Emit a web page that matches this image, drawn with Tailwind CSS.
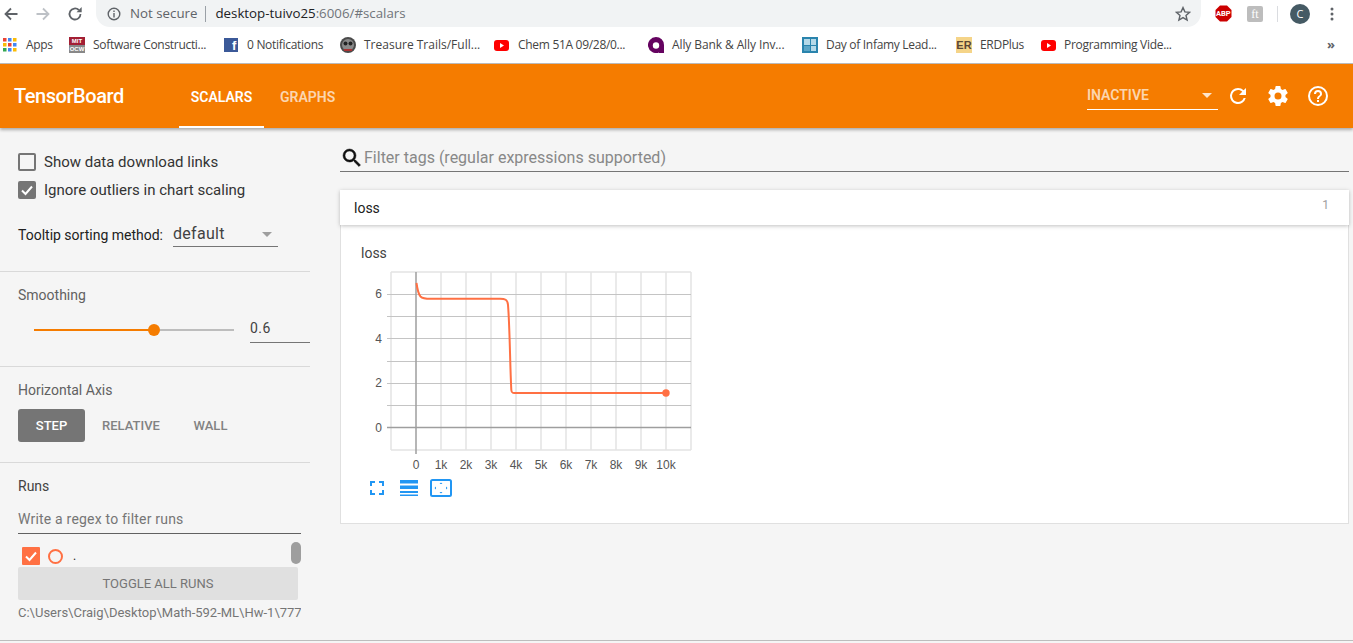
<!DOCTYPE html>
<html>
<head>
  <title>TensorBoard</title>
  <script src="https://cdn.jsdelivr.net/npm/@tailwindcss/browser@4"></script>
  <meta name="viewport" content="width=device-width, initial-scale=1.0"/>
</head>
<body class="h-[643px] w-[1353px] overflow-hidden bg-[#f5f5f5] font-['Roboto',sans-serif]">
  <!-- browser toolbar -->
  <div class="h-[27px] bg-white flex items-center relative">
    <div class="w-[96px] flex items-center pl-[3px] gap-[16px] shrink-0">
      <svg class="w-[16px] h-[16px]" viewBox="0 0 16 16"><path d="M14.5 8H3M8 2.5 2.5 8 8 13.5" fill="none" stroke="#5f6368" stroke-width="1.8"/></svg>
      <svg class="w-[16px] h-[16px]" viewBox="0 0 16 16"><path d="M1.5 8H13M8 2.5 13.5 8 8 13.5" fill="none" stroke="#bdc1c6" stroke-width="1.8"/></svg>
      <svg class="w-[16px] h-[16px]" viewBox="0 0 16 16"><path d="M13.5 8A5.5 5.5 0 1 1 11.8 4" fill="none" stroke="#5f6368" stroke-width="1.8"/><path d="M9.5 6.2h5.2V1z" fill="#5f6368"/></svg>
    </div>
    <div class="w-[1105px] h-[27px] bg-[#f1f3f4] rounded-b-[14px] flex items-center pl-[11px] font-['Open_Sans',sans-serif] text-[13.3px] shrink-0">
      <svg class="w-[14px] h-[14px] mr-[9px]" viewBox="0 0 14 14"><circle cx="7" cy="7" r="5.8" fill="none" stroke="#5f6368" stroke-width="1.4"/><path d="M6.3 3.5h1.4v1.4H6.3zM6.3 6h1.4v4.5H6.3z" fill="#5f6368"/></svg>
      <span class="text-[#5f6368]">Not secure</span>
      <span class="w-px h-[16px] bg-[#9aa0a6] ml-[8px] mr-[9px]"></span>
      <span class="text-[#202124]">desktop-tuivo25</span><span class="text-[#70757a]">:6006/#scalars</span>
      <svg class="w-[16px] h-[16px] ml-auto mr-[10px]" viewBox="0 0 16 16"><path d="m8 1.6 1.9 4.3 4.7.4-3.6 3.1 1.1 4.6L8 11.6l-4.1 2.4L5 9.4 1.4 6.3l4.7-.4z" fill="none" stroke="#5f6368" stroke-width="1.4"/></svg>
    </div>
    <div class="flex items-center flex-1">
      <svg class="w-[17px] h-[17px] ml-[14px]" viewBox="0 0 17 17"><path d="M5 .5h7L16.500 5v7L12 16.500H5L.5 12V5z" fill="#c00"/></svg>
      <span class="absolute left-[1216px] top-[9px] text-[7.500px] font-bold text-white leading-[10px]">ABP</span>
      <span class="w-[16px] h-[16px] ml-[15px] bg-[#bdbdbd] rounded-[2px] text-white text-[12px] leading-[16px] text-center font-['Liberation_Serif',serif]">ft</span>
      <span class="w-px h-[16px] bg-[#dadce0] ml-[14px]"></span>
      <span class="w-[20px] h-[20px] ml-[12px] rounded-full bg-[#455a64] text-white text-[11px] leading-[20px] text-center font-['Open_Sans',sans-serif]">C</span>
      <svg class="w-[4px] h-[14px] ml-[20px]" viewBox="0 0 4 14"><circle cx="2" cy="2" r="1.500" fill="#5f6368"/><circle cx="2" cy="7" r="1.500" fill="#5f6368"/><circle cx="2" cy="12" r="1.500" fill="#5f6368"/></svg>
    </div>
  </div>

  <!-- bookmarks bar -->
  <div class="h-[36px] bg-white border-b border-[#bdbdbd] box-content flex items-center text-[12px] tracking-[-0.3px] text-[#444] font-['Open_Sans',sans-serif] relative">
    <div class="flex items-center w-[69px] pl-[3px] gap-[9px]">
      <svg class="w-[14px] h-[14px]" viewBox="0 0 14 14">
        <rect width="3.500" height="3.500" fill="#ea4335"/><rect x="5" width="3.500" height="3.500" fill="#4285f4"/><rect x="10" width="3.500" height="3.500" fill="#fbbc05"/>
        <rect y="5" width="3.500" height="3.500" fill="#fbbc05"/><rect x="5" y="5" width="3.500" height="3.500" fill="#ea4335"/><rect x="10" y="5" width="3.500" height="3.500" fill="#4285f4"/>
        <rect y="10" width="3.500" height="3.500" fill="#34a853"/><rect x="5" y="10" width="3.500" height="3.500" fill="#4285f4"/><rect x="10" y="10" width="3.500" height="3.500" fill="#fbbc05"/>
      </svg>
      <span>Apps</span>
    </div>
    <div class="flex items-center w-[155px] gap-[8px]">
      <span class="w-[16px] h-[16px] bg-[#888] flex flex-col text-white text-[6px] leading-[8px] font-bold text-center font-['Liberation_Sans',sans-serif] tracking-normal"><span class="bg-[#a31f34]">MIT</span><span>OCW</span></span>
      <span>Software Constructi...</span>
    </div>
    <div class="flex items-center w-[116px] gap-[9px]">
      <span class="w-[14px] h-[14px] bg-[#3b5998] text-white text-[13px] leading-[15px] text-right pr-[2px] font-bold font-['Liberation_Sans',sans-serif]">f</span>
      <span>0 Notifications</span>
    </div>
    <div class="flex items-center w-[154px] gap-[8px]">
      <svg class="w-[16px] h-[16px]" viewBox="0 0 16 16"><circle cx="8" cy="8" r="8" fill="#4a4a4a"/><circle cx="8" cy="8" r="6" fill="#8a8a8a"/><circle cx="5.500" cy="6.500" r="2" fill="#222"/><circle cx="10.500" cy="6.500" r="2" fill="#222"/><path d="M4 12h8v2H4z" fill="#a33"/></svg>
      <span class="tracking-normal">Treasure Trails/Full...</span>
    </div>
    <div class="flex items-center w-[154px] gap-[9px]">
      <svg class="w-[15px] h-[11px]" viewBox="0 0 15 11"><rect width="15" height="11" rx="3" fill="#f00"/><path d="m6 3 4 2.500L6 8z" fill="#fff"/></svg>
      <span>Chem 51A 09/28/0...</span>
    </div>
    <div class="flex items-center w-[154px] gap-[8px]">
      <svg class="w-[16px] h-[16px]" viewBox="0 0 16 16"><path d="M8 0a8 8 0 1 0 3 15.400V16h5V8a8 8 0 0 0-8-8z" fill="#650360"/><circle cx="8" cy="8.500" r="3.200" fill="#fff"/></svg>
      <span class="tracking-[-0.1px]">Ally Bank &amp; Ally Inv...</span>
    </div>
    <div class="flex items-center w-[154px] gap-[8px]">
      <span class="w-[16px] h-[16px] bg-[#2a84ad] grid grid-cols-2 gap-[1px] p-[2px]"><i class="bg-[#b5d9e8]"></i><i class="bg-[#b5d9e8]"></i><i class="bg-[#5ba5c6]"></i><i class="bg-[#b5d9e8]"></i></span>
      <span>Day of Infamy Lead...</span>
    </div>
    <div class="flex items-center w-[85px] gap-[8px]">
      <span class="w-[16px] h-[16px] bg-[#f5d488] text-[#5b4636] text-[11px] leading-[16px] font-bold text-center tracking-normal font-['Liberation_Sans',sans-serif]">ER</span>
      <span>ERDPlus</span>
    </div>
    <div class="flex items-center gap-[8px]">
      <svg class="w-[15px] h-[11px]" viewBox="0 0 15 11"><rect width="15" height="11" rx="3" fill="#f00"/><path d="m6 3 4 2.500L6 8z" fill="#fff"/></svg>
      <span>Programming Vide...</span>
    </div>
    <span class="absolute left-[1327px] top-[9px] text-[13px] leading-[16px] text-[#5f6368] font-bold">»</span>
  </div>

  <!-- app header -->
  <header class="h-[64px] bg-[#f57c00] flex items-stretch text-white shadow-[0_2px_3px_rgba(0,0,0,0.3)] relative">
    <div class="w-[179px] pl-[14px] flex items-center text-[20px] font-medium tracking-[-0.45px]">TensorBoard</div>
    <div class="w-[85px] flex items-center justify-center text-[14px] font-semibold border-b-2 border-white pt-[4px]">SCALARS</div>
    <div class="ml-[16px] flex items-center text-[14px] font-semibold text-white/70 pt-[2px]">GRAPHS</div>
    <div class="ml-auto flex items-center">
      <div class="w-[131px] h-[30px] border-b border-white flex items-center justify-between text-[14px] font-semibold text-white/70 mt-[-3px] pt-[2px]">
        <span>INACTIVE</span>
        <span class="w-0 h-0 mr-[6px] border-x-[5px] border-x-transparent border-t-[5px] border-t-white/80"></span>
      </div>
      <svg class="w-[24px] h-[24px] ml-[8px]" viewBox="0 0 24 24"><path d="M17.650 6.350A7.960 7.960 0 0 0 12 4a8 8 0 1 0 7.730 10h-2.080A6 6 0 1 1 12 6c1.660 0 3.140.690 4.220 1.780L13 11h7V4z" fill="#fff"/></svg>
      <svg class="w-[24px] h-[24px] ml-[16px]" viewBox="0 0 24 24"><path d="M19.430 12.980c.04-.32.070-.640.070-.980s-.03-.660-.07-.980l2.110-1.650a.5.500 0 0 0 .120-.640l-2-3.460a.5.500 0 0 0-.610-.220l-2.490 1a7.300 7.300 0 0 0-1.690-.980l-.380-2.650A.49.490 0 0 0 14 2h-4a.49.490 0 0 0-.490.420l-.380 2.650a7.700 7.700 0 0 0-1.690.980l-2.490-1a.5.500 0 0 0-.610.220l-2 3.460a.490.490 0 0 0 .120.640l2.110 1.650c-.04.320-.070.650-.070.980s.03.660.07.980l-2.110 1.650a.5.500 0 0 0-.120.640l2 3.460c.120.220.390.300.610.220l2.490-1c.520.400 1.080.730 1.690.980l.380 2.650c.030.240.240.420.490.420h4c.250 0 .460-.180.490-.420l.380-2.650a7.700 7.700 0 0 0 1.690-.980l2.490 1c.230.090.490 0 .610-.220l2-3.460a.5.500 0 0 0-.120-.640zM12 15.500a3.500 3.500 0 1 1 0-7 3.500 3.500 0 0 1 0 7z" fill="#fff"/></svg>
      <svg class="w-[24px] h-[24px] ml-[16px] mr-[23px]" viewBox="0 0 24 24"><path d="M11 18h2v-2h-2zm1-16a10 10 0 1 0 0 20 10 10 0 0 0 0-20zm0 18a8 8 0 1 1 0-16 8 8 0 0 1 0 16zm0-14a4 4 0 0 0-4 4h2a2 2 0 1 1 4 0c0 2-3 1.750-3 5h2c0-2.250 3-2.500 3-5a4 4 0 0 0-4-4z" fill="#fff"/></svg>
    </div>
  </header>

  <div class="h-[512px] flex border-b border-[#bdbdbd] box-content">
    <!-- sidebar -->
    <aside class="w-[310px] shrink-0 text-[14px] text-[#424242]">
      <section class="h-[144px] border-b border-[#d9d9d9] pl-[18px] pt-[25px]">
        <label class="flex items-center h-[18px] gap-[8px] text-[15px] text-[#333]">
          <span class="w-[18px] h-[18px] rounded-[2px] border-2 border-[#757575]"></span>Show data download links
        </label>
        <label class="flex items-center h-[18px] gap-[8px] mt-[10px] text-[15px] text-[#333]">
          <span class="w-[18px] h-[18px] rounded-[2px] bg-[#757575] flex items-center justify-center">
            <svg class="w-[14px] h-[14px]" viewBox="0 0 14 14"><path d="m2 7.500 3.500 3.500L12 3.500" fill="none" stroke="#fff" stroke-width="2"/></svg>
          </span>Ignore outliers in chart scaling
        </label>
        <div class="flex items-start mt-[21px]">
          <span class="text-[#212121] pt-[5px] w-[155px]">Tooltip sorting method:</span>
          <div class="w-[105px] h-[27px] border-b border-[#757575] flex items-start justify-between text-[16px] text-[#424242] tracking-[0.3px]">
            <span class="leading-[20px] pt-[4px] box-content">default</span>
            <span class="w-0 h-0 mt-[12px] mr-[6px] border-x-[5px] border-x-transparent border-t-[5px] border-t-[#9e9e9e]"></span>
          </div>
        </div>
      </section>
      <section class="h-[95px] border-b border-[#d9d9d9] pt-[15px]">
        <div class="pl-[18px] leading-[16px] text-[#616161]">Smoothing</div>
        <div class="flex items-start mt-[14px]">
          <div class="ml-[34px] w-[200px] h-[12px] mt-[7px] flex items-center">
            <span class="w-[120px] h-[2px] bg-[#f57c00]"></span>
            <span class="w-[12px] h-[12px] -ml-[6px] rounded-full bg-[#f57c00]"></span>
            <span class="flex-1 h-[2px] bg-[#bdbdbd]"></span>
          </div>
          <div class="ml-[16px] w-[60px] h-[26px] border-b border-[#757575] text-[14px] text-[#424242] leading-[22px] tracking-[0.5px]">0.6</div>
        </div>
      </section>
      <section class="h-[96px] border-b border-[#d9d9d9] pt-[15px]">
        <div class="pl-[18px] leading-[16px] text-[#616161]">Horizontal Axis</div>
        <div class="flex items-center ml-[18px] mt-[11px] text-[13px] text-[#757575] font-medium">
          <span class="w-[67px] h-[33px] rounded-[3px] bg-[#757575] text-white flex items-center justify-center">STEP</span>
          <span class="w-[92px] text-center text-[#828282]">RELATIVE</span>
          <span class="w-[67px] text-center text-[#828282]">WALL</span>
        </div>
      </section>
      <section class="pt-[15px]">
        <div class="pl-[18px] leading-[16px] text-[#424242]">Runs</div>
        <div class="ml-[18px] w-[283px] mt-[17px] h-[23px] border-b border-[#616161] text-[#757575] leading-[16px] tracking-[0.2px]">Write a regex to filter runs</div>
        <div class="relative ml-[18px] w-[283px] h-[33px] flex items-start pt-[13px] pl-[4px]">
          <span class="w-[18px] h-[18px] rounded-[1px] bg-[#ff7043] flex items-center justify-center">
            <svg class="w-[14px] h-[14px]" viewBox="0 0 14 14"><path d="m2 7.500 3.500 3.500L12 3.500" fill="none" stroke="#fff" stroke-width="2"/></svg>
          </span>
          <span class="w-[15px] h-[15px] ml-[8px] mt-[2px] rounded-full border-2 border-[#ff7043]"></span>
          <span class="ml-[10px] text-[12px] leading-[18px] text-[#212121]">.</span>
          <span class="absolute right-0 top-[8px] w-[10px] h-[22px] rounded-full bg-[#9e9e9e]"></span>
        </div>
        <div class="ml-[18px] w-[280px] h-[33px] bg-[#e0e0e0] rounded-[2px] flex items-center justify-center text-[13px] text-[#757575]">TOGGLE ALL RUNS</div>
        <div class="ml-[18px] w-[283px] mt-[5px] overflow-hidden whitespace-nowrap text-[13px] leading-[16px] text-[#757575]">C:\Users\Craig\Desktop\Math-592-ML\Hw-1\777</div>
      </section>
    </aside>

    <!-- main -->
    <main class="w-[1009px] ml-[30px]">
      <div class="h-[44px] border-b border-[#757575] flex items-center pt-[16px] text-[16px] text-[#888]">
        <svg class="w-[24px] h-[24px] shrink-0" viewBox="0 0 24 24"><path d="M15.500 14h-.790l-.280-.270A6.470 6.470 0 0 0 16 9.500 6.500 6.500 0 1 0 9.500 16c1.610 0 3.090-.590 4.230-1.570l.270.280v.790l5 4.990L20.490 19zm-6 0a4.500 4.500 0 1 1 0-9 4.500 4.500 0 0 1 0 9z" fill="#111" stroke="#111" stroke-width=".5"/></svg>
        <span>Filter tags (regular expressions supported)</span>
      </div>
      <div class="mt-[18px] h-[35px] bg-white shadow-[0_1px_4px_rgba(0,0,0,0.25)] flex items-center justify-between pl-[14px] pr-[20px] relative text-[14px] text-[#212121]">
        <span class="pt-[1px]">loss</span><span class="text-[12px] text-[#9e9e9e] -mt-[6px]">1</span>
      </div>
      <div class="h-[299px] bg-white border border-[#e0e0e0] border-t-0 pl-[20px] pt-[20px]">
        <div class="text-[14px] leading-[16px] text-[#424242]">loss</div>
        <svg class="block -ml-[21px] mt-[1px]" width="360" height="216" viewBox="340 262 360 216">
          <g stroke="#e3e3e3" stroke-width="1.500" fill="none">
            <path d="M391 272V450M441 272V450M466 272V450M491 272V450M516 272V450M541 272V450M566 272V450M591 272V450M616 272V450M641 272V450M666 272V450M691 272V450"/>
            <path d="M391 272H691M391 450H691"/>
          </g>
          <g stroke="#c4c4c4" stroke-width="1" fill="none">
            <path d="M387 294.500H691M387 316.500H691M387 338.500H691M387 361.500H691M387 383.500H691M387 405.500H691"/>
          </g>
          <path d="M416 272V454M387 427.500H691" stroke="#9e9e9e" stroke-width="1.500" fill="none"/>
          <path d="M416.500 283c.8 6 1.800 11 4 13.500 2 2 4 2.300 10 2.300H500c5 0 7.500.500 8 6 1.800 22 2 60 3.300 85 .2 2.700.7 3.200 3 3.200H666" fill="none" stroke="#ff7043" stroke-width="2"/>
          <circle cx="666" cy="393" r="3.700" fill="#ff7043"/>
          <g font-family="Liberation Sans, sans-serif" font-size="12" fill="#555" text-anchor="end">
            <text x="382" y="298">6</text><text x="382" y="343">4</text><text x="382" y="387">2</text><text x="382" y="432">0</text>
          </g>
          <g font-family="Liberation Sans, sans-serif" font-size="12" fill="#555" text-anchor="middle">
            <text x="416" y="469">0</text><text x="441" y="469">1k</text><text x="466" y="469">2k</text><text x="491" y="469">3k</text><text x="516" y="469">4k</text><text x="541" y="469">5k</text><text x="566" y="469">6k</text><text x="591" y="469">7k</text><text x="616" y="469">8k</text><text x="641" y="469">9k</text><text x="666" y="469">10k</text>
          </g>
        </svg>
        <div class="flex items-center mt-[1px] ml-[9px]">
          <svg class="w-[14px] h-[14px]" viewBox="0 0 14 14"><path d="M1 5V1h4M9 1h4v4M13 9v4H9M5 13H1V9" fill="none" stroke="#2196f3" stroke-width="2"/></svg>
          <svg class="w-[18px] h-[16px] ml-[16px]" viewBox="0 0 18 16"><path d="M0 0h18v3.500H0zM0 5.500h18V9H0zM0 11h18v2H0zM0 14.500h18V16H0z" fill="#2196f3"/></svg>
          <svg class="w-[22px] h-[18px] ml-[12px]" viewBox="0 0 22 18"><rect x="1" y="1" width="20" height="16" rx="1.500" fill="none" stroke="#2196f3" stroke-width="2"/><path d="m11 3.500 1.500 1.500h-3zM11 14.500 9.500 13h3zM4.500 9 6 7.500v3zM17.500 9 16 10.500v-3z" fill="#2196f3"/></svg>
        </div>
      </div>
    </main>
  </div>
</body>
</html>
